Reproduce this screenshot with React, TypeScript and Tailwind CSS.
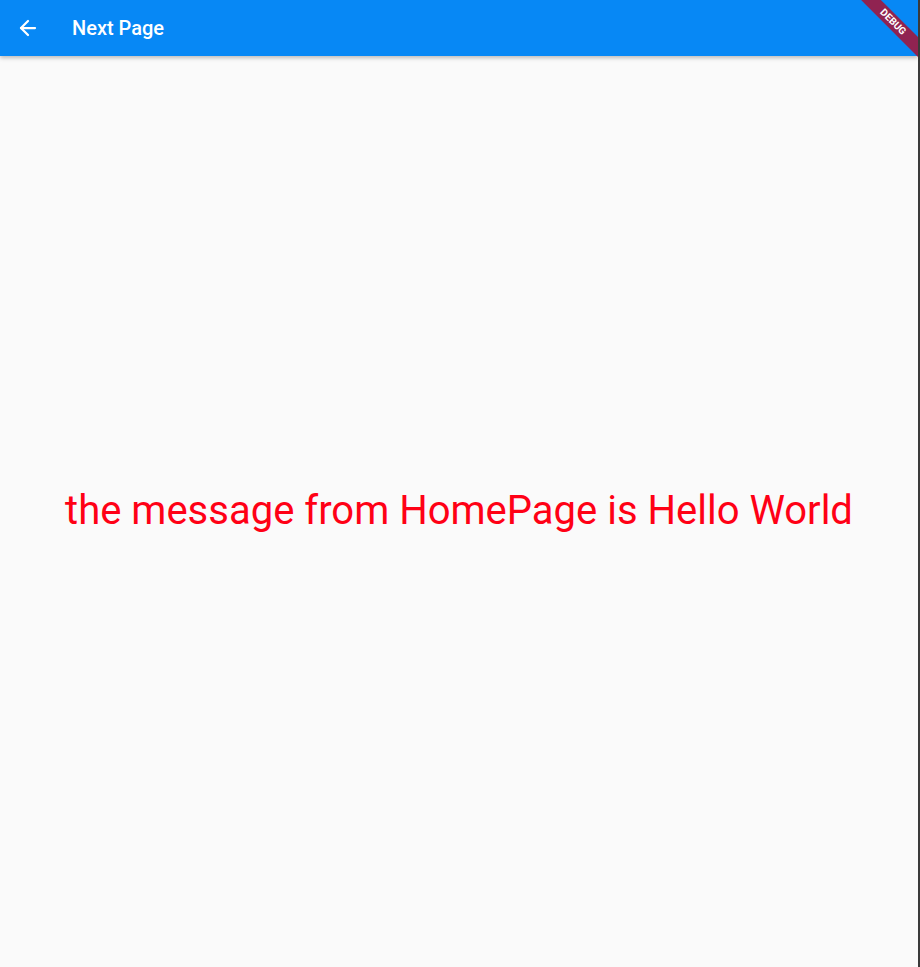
import { ArrowLeft } from "lucide-react";

export default function App() {
  return (
    <div className="relative flex h-[967px] w-[920px] flex-col overflow-hidden bg-[#fafafa] font-['Roboto',sans-serif] border-r-2 border-[#3a3a3a]">
      <header className="z-10 flex h-14 shrink-0 items-center bg-[#0788f5] shadow-[0_2px_4px_rgba(0,0,0,0.25)]">
        <div className="flex w-14 items-center justify-center">
          <ArrowLeft className="h-6 w-6 text-white" strokeWidth={2.25} />
        </div>
        <h1 className="ml-4 text-xl font-medium text-white">Next Page</h1>
      </header>

      <main className="flex flex-1 items-center justify-center pb-[2px]">
        <p className="text-[40px] text-[#ff0015]">the message from HomePage is Hello World</p>
      </main>

      {/* debug banner */}
      <div className="pointer-events-none absolute right-0 top-0 z-20 h-[80px] w-[80px] overflow-hidden">
        <div className="absolute left-[-1px] top-[15px] w-[112px] rotate-45 bg-[#a0183f]/90 py-[1px] text-center text-[10px] font-bold leading-[12px] text-white">
          DEBUG
        </div>
      </div>
    </div>
  );
}
